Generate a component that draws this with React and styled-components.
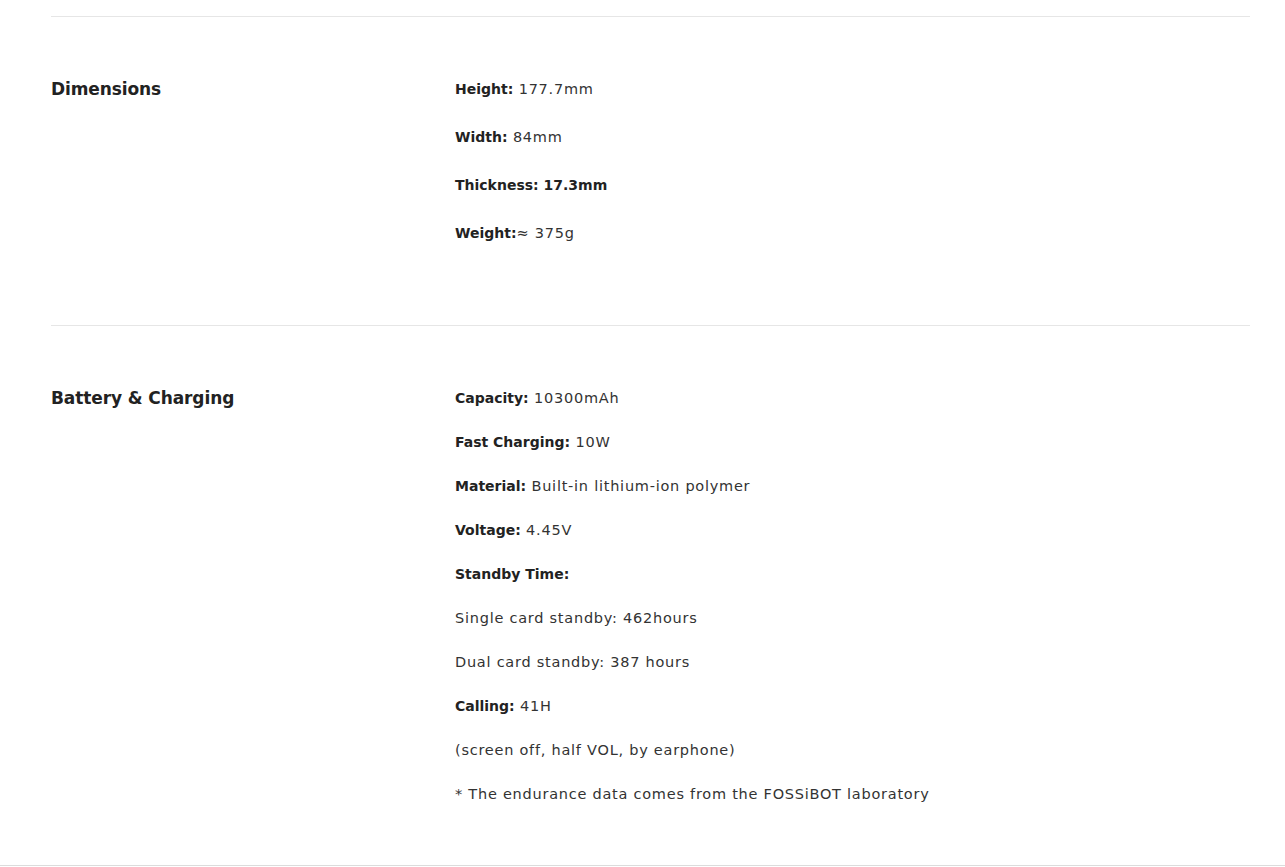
import React from 'react';
import styled, { createGlobalStyle } from 'styled-components';

const Global = createGlobalStyle`
  html, body {
    margin: 0;
    padding: 0;
    background: #fff;
  }
  body {
    font-family: 'DejaVu Sans', 'Noto Sans', sans-serif;
    color: #333;
  }
`;

const Page = styled.div`
  min-height: 867px;
  display: flex;
  flex-direction: column;
`;

const Wrap = styled.div`
  margin: 16px 35px 0 51px;
  flex: 1;
`;

const Section = styled.section`
  display: grid;
  grid-template-columns: 404px 1fr;
  border-top: 1px solid #e6e6e6;
  padding: 60px 0 ${p => p.$bottom}px;
`;

const Title = styled.h3`
  margin: 0;
  font-size: 17px;
  line-height: 24px;
  font-weight: 700;
  letter-spacing: -0.1px;
  color: #222;
`;

const List = styled.div`
  display: flex;
  flex-direction: column;
  gap: ${p => p.$gap}px;
`;

const Line = styled.p`
  margin: 0;
  font-size: 14.5px;
  line-height: 24px;
  letter-spacing: 0.75px;
  color: #333;

  b {
    font-size: 14px;
    letter-spacing: 0;
    font-weight: 700;
    color: #222;
  }
`;

const Rule = styled.div`
  height: 1px;
  background: #dcdcdc;
  margin-bottom: 1px;
`;

const specs = [
  {
    title: 'Dimensions',
    gap: 24,
    bottom: 80,
    rows: [
      ['Height:', ' 177.7mm'],
      ['Width:', ' 84mm'],
      ['Thickness: 17.3mm', ''],
      ['Weight:', '≈ 375g'],
    ],
  },
  {
    title: 'Battery & Charging',
    gap: 20,
    bottom: 59,
    rows: [
      ['Capacity:', ' 10300mAh'],
      ['Fast Charging:', ' 10W'],
      ['Material:', ' Built-in lithium-ion polymer'],
      ['Voltage:', ' 4.45V'],
      ['Standby Time:', ''],
      ['', 'Single card standby: 462hours'],
      ['', 'Dual card standby: 387 hours'],
      ['Calling:', ' 41H'],
      ['', '(screen off, half VOL, by earphone)'],
      ['', '* The endurance data comes from the FOSSiBOT laboratory'],
    ],
  },
];

export default function App() {
  return (
    <Page>
      <Global />
      <Wrap>
        {specs.map(s => (
          <Section key={s.title} $bottom={s.bottom}>
            <Title>{s.title}</Title>
            <List $gap={s.gap}>
              {s.rows.map((r, i) => (
                <Line key={i}>
                  {r[0] && <b>{r[0]}</b>}
                  {r[1]}
                </Line>
              ))}
            </List>
          </Section>
        ))}
      </Wrap>
      <Rule />
    </Page>
  );
}
